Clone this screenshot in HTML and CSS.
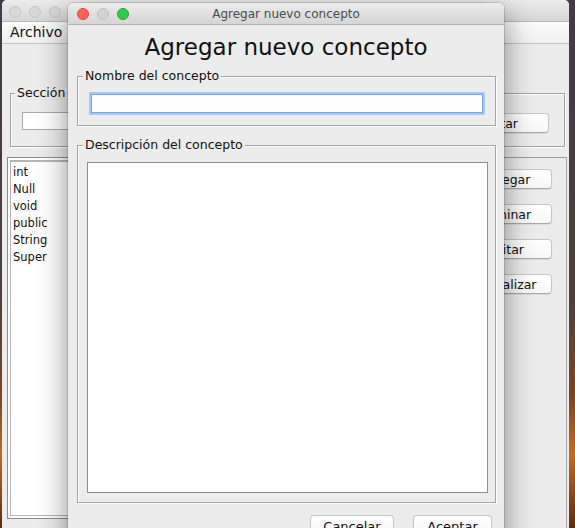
FILE: index.html
```html
<!DOCTYPE html>
<html lang="es">
<head>
<meta charset="utf-8">
<title>Agregar nuevo concepto</title>
<link rel="stylesheet" href="styles.css">
</head>
<body>
<div class="win main">
  <div class="titlebar">
    <span class="light off"></span><span class="light off"></span><span class="light off"></span>
  </div>
  <div class="menubar"><span>Archivo</span></div>
  <div class="main-body">
    <fieldset class="fs sec">
      <legend>Sección</legend>
      <div class="sec-row">
        <div class="field"></div>
        <button class="btn">Consultar</button>
      </div>
    </fieldset>
    <div class="lower">
      <div class="scroll">
        <ul class="list">
          <li>int</li>
          <li>Null</li>
          <li>void</li>
          <li>public</li>
          <li>String</li>
          <li>Super</li>
        </ul>
      </div>
      <div class="side">
        <button class="btn side-btn">Agregar</button>
        <button class="btn side-btn">Eliminar</button>
        <button class="btn side-btn">Editar</button>
        <button class="btn side-btn">Actualizar</button>
      </div>
    </div>
  </div>
</div>

<div class="win dialog">
  <div class="dlg-titlebar">
    <div class="lights">
      <span class="light red"></span><span class="light gray"></span><span class="light green"></span>
    </div>
    <div class="dlg-title">Agregar nuevo concepto</div>
    <div></div>
  </div>
  <h1 class="heading">Agregar nuevo concepto</h1>
  <fieldset class="fs dfs nombre">
    <legend>Nombre del concepto</legend>
    <div class="nombre-body">
      <div class="field focus"></div>
    </div>
  </fieldset>
  <fieldset class="fs dfs desc">
    <legend>Descripción del concepto</legend>
    <div class="desc-body">
      <div class="textarea"></div>
    </div>
  </fieldset>
  <div class="actions">
    <button class="btn dlg-btn cancel">Cancelar</button>
    <button class="btn dlg-btn ok">Aceptar</button>
  </div>
</div>
</body>
</html>
```

FILE: styles.css
```css
html, body {
  margin: 0;
  padding: 0;
}
body {
  width: 575px;
  height: 528px;
  overflow: hidden;
  position: relative;
  font-family: "DejaVu Sans", "Liberation Sans", sans-serif;
  color: #111;
  background: linear-gradient(to bottom, #3f3c44 0%, #4a3f3e 55%, #7a4424 75%, #c56a22 86%, #5a2c14 100%);
}

.win {
  position: absolute;
  background: #ececec;
  border-radius: 5px 5px 0 0;
}

/* ---------- background window ---------- */
.main {
  left: 2px;
  top: 0;
  width: 567px;
  height: 540px;
  overflow: hidden;
}
.titlebar {
  height: 19px;
  padding-top: 2px;
  border-bottom: 1px solid #b9b9b9;
  background: linear-gradient(#ececec, #d6d6d6);
  display: flex;
  align-items: center;
  gap: 8px;
  padding-left: 7px;
}
.light {
  width: 12px;
  height: 12px;
  border-radius: 50%;
  box-sizing: border-box;
  display: inline-block;
}
.light.off {
  background: #d8d8d8;
  border: 1px solid #c6c6c6;
}
.menubar {
  height: 21px;
  line-height: 21px;
  border-bottom: 1px solid #c4c4c4;
  background: linear-gradient(#fbfbfb, #f0f0f0);
  padding-left: 8px;
  font-size: 14px;
}
.main-body {
  padding: 0 2px 0 5px;
}

.fs {
  margin: 0;
  padding: 0;
  min-width: 0;
  border: 1px solid #a4a4a4;
  box-shadow: inset 1px 1px 0 #fff, 1px 1px 0 #fff;
}
.fs legend {
  margin-left: 4px;
  padding: 0 2px;
  font-size: 12.5px;
  line-height: 16px;
  background: #ececec;
  color: #111;
}

.sec {
  margin: 41px 2px 0 3px;
}
.sec-row {
  display: flex;
  align-items: flex-start;
  gap: 10px;
  padding: 11px 15px 13px 11px;
}
.field {
  height: 18px;
  box-sizing: border-box;
  background: #fff;
  border: 1px solid #a9a9a9;
  flex: 1;
}
.btn {
  font-family: "DejaVu Sans", "Liberation Sans", sans-serif;
  font-size: 12.5px;
  color: #111;
  background: linear-gradient(#ffffff, #f7f7f7);
  border: 1px solid #c6c6c6;
  border-bottom-color: #a9a9a9;
  border-radius: 4px;
  box-shadow: 0 1px 1px rgba(0, 0, 0, 0.08);
  padding: 0;
  height: 21px;
  box-sizing: border-box;
}
.sec-row .btn {
  width: 122px;
  height: 20px;
  margin-top: 1px;
}

.lower {
  display: flex;
  gap: 5px;
  margin-top: 10px;
}
.scroll {
  flex: 1;
  height: 356px;
  background: #fff;
  border: 1px solid #8d8d8d;
  padding: 2px;
}
.list {
  list-style: none;
  margin: 0;
  height: 100%;
  box-sizing: border-box;
  border: 1px solid #b6b6b6;
  border-top-width: 2px;
  padding: 2px 0 0 2px;
  font-size: 11.5px;
  line-height: 17px;
}
.side {
  width: 110px;
  border-top: 1px solid #9c9c9c;
  border-right: 1px solid #a8a8a8;
  padding: 11px 14px 0 0;
  display: flex;
  flex-direction: column;
  align-items: flex-end;
  gap: 15px;
  height: 360px;
}
.side-btn {
  width: 93px;
  height: 20px;
}

/* ---------- dialog ---------- */
.dialog {
  left: 68px;
  top: 3px;
  width: 436px;
  height: 560px;
  box-shadow: 0 0 0 1px rgba(0, 0, 0, 0.12), 0 10px 30px rgba(0, 0, 0, 0.45);
  display: flex;
  flex-direction: column;
}
.dlg-titlebar {
  height: 21px;
  border-bottom: 1px solid #b4b4b4;
  background: linear-gradient(#ececec, #d5d5d5);
  border-radius: 5px 5px 0 0;
  display: grid;
  grid-template-columns: 1fr auto 1fr;
  align-items: center;
}
.lights {
  display: flex;
  gap: 8px;
  padding-left: 9px;
}
.light.red {
  background: #fc605b;
  border: 1px solid #de4943;
}
.light.gray {
  background: #d3d3d3;
  border: 1px solid #c1c1c1;
}
.light.green {
  background: #34c84a;
  border: 1px solid #25a535;
}
.dlg-title {
  font-size: 12px;
  color: #4a4a4a;
}
.heading {
  margin: 8px 0 0;
  text-align: center;
  font-size: 23px;
  line-height: 28px;
  font-weight: normal;
  color: #111;
}
.dfs {
  margin: 7px 8px 0 9px;
}
.dfs legend {
  margin-left: 5px;
}
.desc {
  margin-top: 11px;
}
.nombre-body {
  padding: 10px 12px 12px 13px;
}
.field.focus {
  height: 19px;
  border: 1px solid #79a5e6;
  box-shadow: 0 0 0 2px #a8c8f4;
}
.desc-body {
  padding: 9px 7px 9px 9px;
}
.textarea {
  height: 331px;
  box-sizing: border-box;
  background: #fff;
  border: 1px solid #8e8e8e;
}
.actions {
  display: flex;
  justify-content: flex-end;
  gap: 19px;
  padding-right: 12px;
  margin-top: 12px;
}
.dlg-btn {
  height: 22px;
  font-size: 13px;
}
.cancel {
  width: 84px;
}
.ok {
  width: 79px;
}
```
